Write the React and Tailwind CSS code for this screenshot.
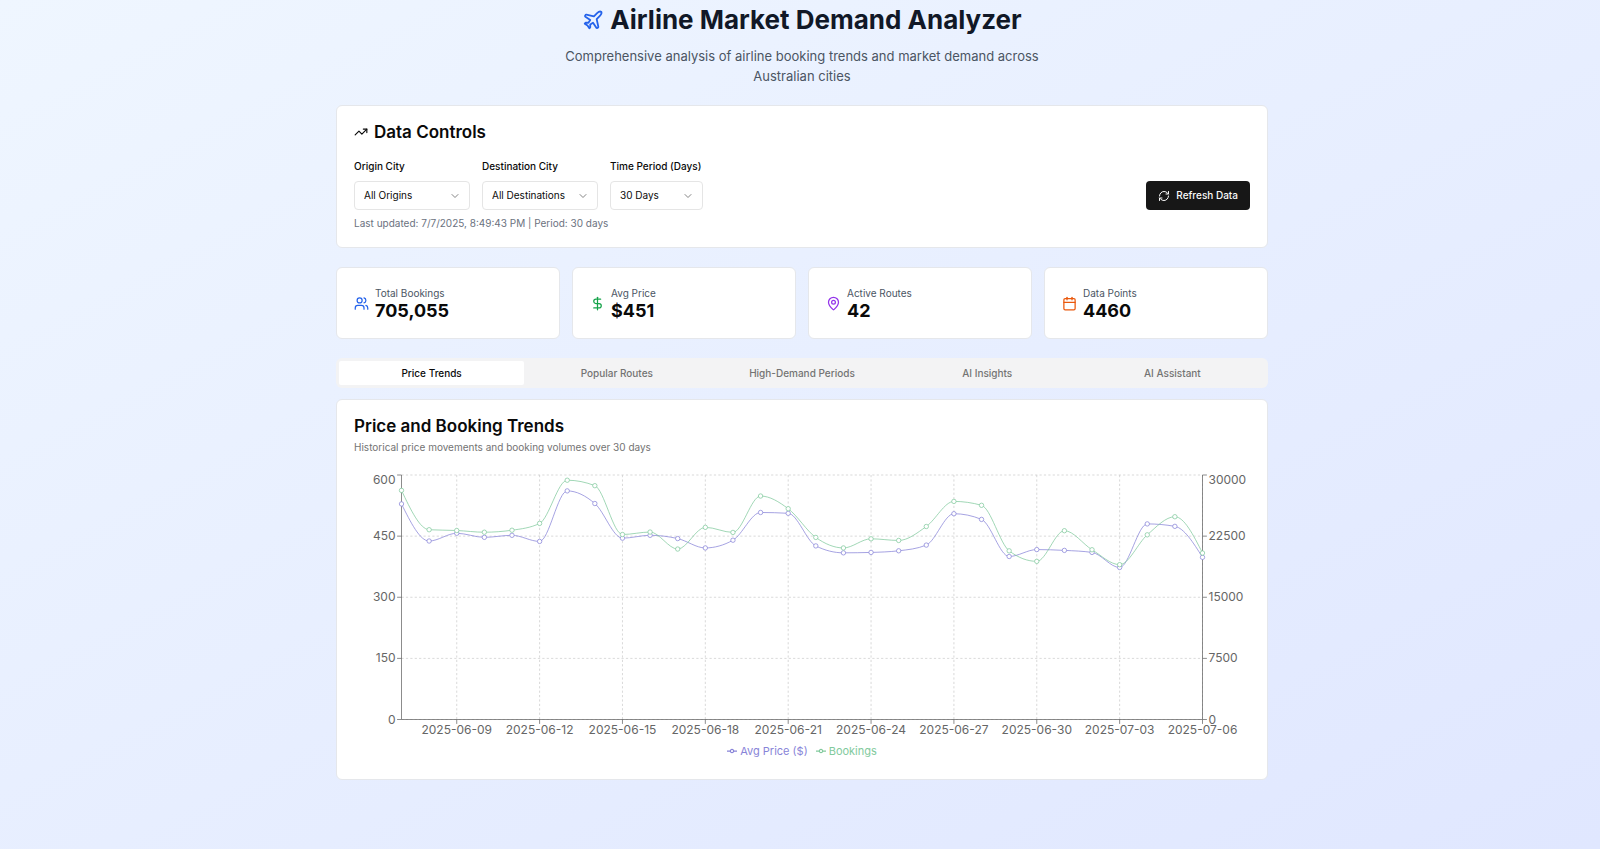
import { useState } from "react";
import {
  Calendar,
  ChevronDown,
  DollarSign,
  MapPin,
  Plane,
  RefreshCw,
  TrendingUp,
  Users,
} from "lucide-react";

const PRICES = [
  529, 438, 457, 447, 452, 437, 561, 530, 445, 452, 444, 421, 440, 508, 506,
  426, 409, 410, 414, 428, 505, 491, 400, 417, 415, 410, 373, 480, 474, 398,
];

const BOOKINGS = [
  28110, 23285, 23190, 22980, 23225, 24060, 29360, 28690, 22700, 23000, 20915,
  23580, 22955, 27420, 25865, 22340, 21050, 22170, 21970, 23680, 26760, 26280,
  20695, 19405, 23165, 20830, 19000, 22660, 24880, 20425,
];

const DATE_TICKS = [
  { index: 2, label: "2025-06-09" },
  { index: 5, label: "2025-06-12" },
  { index: 8, label: "2025-06-15" },
  { index: 11, label: "2025-06-18" },
  { index: 14, label: "2025-06-21" },
  { index: 17, label: "2025-06-24" },
  { index: 20, label: "2025-06-27" },
  { index: 23, label: "2025-06-30" },
  { index: 26, label: "2025-07-03" },
  { index: 29, label: "2025-07-06" },
];

const VALUE_TICKS = [
  { price: 0, bookings: 0 },
  { price: 150, bookings: 7500 },
  { price: 300, bookings: 15000 },
  { price: 450, bookings: 22500 },
  { price: 600, bookings: 30000 },
];

const PLOT = { left: 47.5, right: 848.5, top: 4, bottom: 248.5 };

const xAt = (i) => PLOT.left + (i * (PLOT.right - PLOT.left)) / 29;
const yAt = (v, max) => PLOT.bottom - (v / max) * (PLOT.bottom - PLOT.top);

// Monotone cubic interpolation through evenly ordered points.
function monotonePath(points) {
  const n = points.length;
  const slopes = [];
  for (let i = 0; i < n - 1; i++) {
    slopes.push(
      (points[i + 1].y - points[i].y) / (points[i + 1].x - points[i].x)
    );
  }
  const tangents = points.map((_, i) => {
    if (i === 0 || i === n - 1) return 0;
    const a = slopes[i - 1];
    const b = slopes[i];
    return (
      (Math.sign(a) + Math.sign(b)) *
      Math.min(Math.abs(a), Math.abs(b), 0.5 * Math.abs((a + b) / 2))
    );
  });
  tangents[0] = (3 * slopes[0] - tangents[1]) / 2;
  tangents[n - 1] = (3 * slopes[n - 2] - tangents[n - 2]) / 2;

  let d = `M${points[0].x},${points[0].y}`;
  for (let i = 0; i < n - 1; i++) {
    const p = points[i];
    const q = points[i + 1];
    const dx = (q.x - p.x) / 3;
    d += `C${p.x + dx},${p.y + dx * tangents[i]},${q.x - dx},${
      q.y - dx * tangents[i + 1]
    },${q.x},${q.y}`;
  }
  return d;
}

function Series({ values, max, color }) {
  const points = values.map((v, i) => ({ x: xAt(i), y: yAt(v, max) }));
  return (
    <g stroke={color} strokeWidth="0.75">
      <path d={monotonePath(points)} fill="none" />
      {points.map((p, i) => (
        <circle key={i} cx={p.x} cy={p.y} r="2.2" fill="#fff" />
      ))}
    </g>
  );
}

function TrendChart() {
  return (
    <svg
      viewBox="0 0 896 264"
      className="block w-full overflow-visible text-[12px]"
      role="img"
      aria-label="Average price and bookings by day"
    >
      <g stroke="#ccc" strokeWidth="0.75" strokeDasharray="2.2 2.2">
        {VALUE_TICKS.map(({ price }) => (
          <line
            key={price}
            x1={PLOT.left}
            x2={PLOT.right}
            y1={yAt(price, 600)}
            y2={yAt(price, 600)}
          />
        ))}
        {DATE_TICKS.map(({ index }) => (
          <line
            key={index}
            x1={xAt(index)}
            x2={xAt(index)}
            y1={PLOT.top}
            y2={PLOT.bottom}
          />
        ))}
      </g>

      <g stroke="#666" strokeWidth="0.75">
        <line x1={PLOT.left} x2={PLOT.right} y1={PLOT.bottom} y2={PLOT.bottom} />
        <line x1={PLOT.left} x2={PLOT.left} y1={PLOT.top} y2={PLOT.bottom} />
        <line x1={PLOT.right} x2={PLOT.right} y1={PLOT.top} y2={PLOT.bottom} />
        {VALUE_TICKS.map(({ price }) => {
          const y = yAt(price, 600);
          return (
            <g key={price}>
              <line x1={PLOT.left - 4.4} x2={PLOT.left} y1={y} y2={y} />
              <line x1={PLOT.right} x2={PLOT.right + 4.4} y1={y} y2={y} />
            </g>
          );
        })}
        {DATE_TICKS.map(({ index }) => (
          <line
            key={index}
            x1={xAt(index)}
            x2={xAt(index)}
            y1={PLOT.bottom}
            y2={PLOT.bottom + 4.4}
          />
        ))}
      </g>

      <g fill="#666">
        {VALUE_TICKS.map(({ price, bookings }) => {
          const y = Math.max(yAt(price, 600), 9) + 4;
          return (
            <g key={price}>
              <text x={PLOT.left - 6} y={y} textAnchor="end">
                {price}
              </text>
              <text x={PLOT.right + 6} y={y}>
                {bookings}
              </text>
            </g>
          );
        })}
        {DATE_TICKS.map(({ index, label }) => (
          <text key={label} x={xAt(index)} y={263} textAnchor="middle">
            {label}
          </text>
        ))}
      </g>

      <Series values={PRICES} max={600} color="#8884d8" />
      <Series values={BOOKINGS} max={30000} color="#82ca9d" />
    </svg>
  );
}

function LegendItem({ label, className }) {
  return (
    <li className={`flex items-center gap-[3px] ${className}`}>
      <svg viewBox="0 0 32 32" className="size-[10px]" aria-hidden="true">
        <path
          d="M0,16h10.67A5.33,5.33,0,1,1,21.33,16H32M21.33,16A5.33,5.33,0,1,1,10.67,16"
          fill="none"
          stroke="currentColor"
          strokeWidth="4"
        />
      </svg>
      {label}
    </li>
  );
}

function SelectField({ id, label, options, width }) {
  return (
    <div className="flex flex-col gap-[7px]">
      <label htmlFor={id} className="text-[10px] leading-4 font-medium">
        {label}
      </label>
      <div className="grid items-center">
        <select
          id={id}
          className={`col-start-1 row-start-1 h-[29px] appearance-none rounded border border-[#e5e5e5] bg-white pl-[9px] pr-6 text-[10px] ${width}`}
        >
          {options.map((option) => (
            <option key={option}>{option}</option>
          ))}
        </select>
        <ChevronDown
          className="pointer-events-none col-start-1 row-start-1 mr-[9px] size-3 justify-self-end text-[#858585]"
          aria-hidden="true"
        />
      </div>
    </div>
  );
}

const CARD = "rounded-md border border-[#e5e7eb] bg-white";

const STATS = [
  { label: "Total Bookings", value: "705,055", Icon: Users, color: "text-[#2563eb]" },
  { label: "Avg Price", value: "$451", Icon: DollarSign, color: "text-[#16a34a]" },
  { label: "Active Routes", value: "42", Icon: MapPin, color: "text-[#9333ea]" },
  { label: "Data Points", value: "4460", Icon: Calendar, color: "text-[#ea580c]" },
];

const TABS = [
  "Price Trends",
  "Popular Routes",
  "High-Demand Periods",
  "AI Insights",
  "AI Assistant",
];

export default function App() {
  const [activeTab, setActiveTab] = useState(TABS[0]);

  return (
    <div className="min-h-screen bg-linear-to-br from-[#eff6ff] to-[#e0e7ff] pr-4 pb-6 pl-5 font-['Inter',sans-serif] text-[10px] text-[#0a0a0a]">
      <main className="mx-auto flex w-full max-w-[932px] flex-col">
        <header className="flex flex-col items-center pt-1 text-center">
          <h1 className="flex items-center justify-center gap-[6px] text-[26px] leading-8 font-bold text-[#111827]">
            <Plane className="size-[22px] text-[#2563eb]" aria-hidden="true" />
            Airline Market Demand Analyzer
          </h1>
          <p className="mt-[10px] max-w-[490px] text-[13px] leading-5 text-[#4b5563]">
            Comprehensive analysis of airline booking trends and market demand
            across Australian cities
          </p>
        </header>

        <section className={`mt-[19px] px-[17px] py-4 ${CARD}`}>
          <h2 className="flex items-center gap-[6px] text-[17px] leading-5 font-semibold">
            <TrendingUp className="size-[14px]" aria-hidden="true" />
            Data Controls
          </h2>
          <div className="mt-4 flex flex-wrap items-end justify-between gap-3">
            <div className="flex flex-wrap gap-3">
              <SelectField
                id="origin"
                label="Origin City"
                options={["All Origins"]}
                width="w-[116px]"
              />
              <SelectField
                id="destination"
                label="Destination City"
                options={["All Destinations"]}
                width="w-[116px]"
              />
              <SelectField
                id="period"
                label="Time Period (Days)"
                options={["30 Days"]}
                width="w-[93px]"
              />
            </div>
            <button
              type="button"
              className="flex h-[29px] items-center gap-[6px] rounded bg-[#171717] px-3 text-[10px] font-medium text-[#fafafa]"
            >
              <RefreshCw className="size-3" aria-hidden="true" />
              Refresh Data
            </button>
          </div>
          <p className="mt-[5px] text-[10px] leading-4 text-[#6b7280]">
            Last updated: 7/7/2025, 8:49:43 PM | Period: 30 days
          </p>
        </section>

        <section className="mt-[19px] grid grid-cols-2 gap-3 md:grid-cols-4">
          {STATS.map(({ label, value, Icon, color }) => (
            <div
              key={label}
              className={`flex items-center gap-[6px] p-[17px] ${CARD}`}
            >
              <Icon className={`size-[15px] ${color}`} aria-hidden="true" />
              <div>
                <p className="leading-4 text-[#4b5563]">{label}</p>
                <p className="text-[18px] leading-5 font-bold">{value}</p>
              </div>
            </div>
          ))}
        </section>

        <div
          role="tablist"
          className="mt-[19px] grid grid-cols-5 rounded-md bg-[#f3f3f4] p-[3px]"
        >
          {TABS.map((tab) => (
            <button
              key={tab}
              type="button"
              role="tab"
              aria-selected={tab === activeTab}
              onClick={() => setActiveTab(tab)}
              className={`h-6 rounded-xs font-medium ${
                tab === activeTab ? "bg-white" : "text-[#737373]"
              }`}
            >
              {tab}
            </button>
          ))}
        </div>

        <section className={`mt-[11px] px-[17px] pt-4 pb-5 ${CARD}`}>
          <h2 className="text-[17px] leading-5 font-semibold">
            Price and Booking Trends
          </h2>
          <p className="mt-[3px] leading-4 text-[#737373]">
            Historical price movements and booking volumes over 30 days
          </p>
          <div className="mt-4">
            <TrendChart />
            <ul className="mt-2 flex justify-center gap-2 text-[11px] leading-4">
              <LegendItem label="Avg Price ($)" className="text-[#8884d8]" />
              <LegendItem label="Bookings" className="text-[#82ca9d]" />
            </ul>
          </div>
        </section>
      </main>
    </div>
  );
}
